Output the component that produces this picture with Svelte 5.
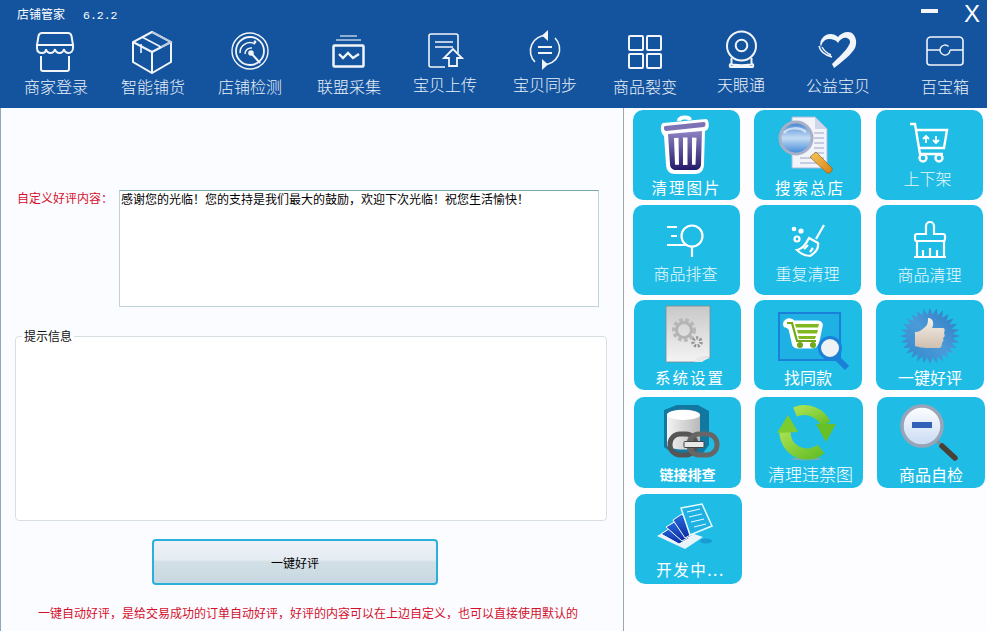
<script>
  const nav = [
    { label: '商家登录', w: 98, y: 0, icon: '<path d="M8 3h26c2 0 3 1 3.500 3L39 15H3l1.500-9C5 4 6 3 8 3Z"/><path d="M3 15v3c0 3 2 5 5 5s4-2 4-4c0 2 2 4 4.500 4s4-2 4.500-4c0 2 2 4 4.500 4s4-2 4.500-4c0 2 2 4 4.500 4s4.500-2 4.500-5v-3"/><path d="M7 26v13a2 2 0 0 0 2 2h24a2 2 0 0 0 2-2V26"/>' },
    { label: '智能铺货', w: 96, y: 0, icon: '<path d="M21 2 40 12v20L21 43 2 32V12Z"/><path d="M2 12 21 22 40 12M21 22v21"/><path d="M11 7 30 17M10 14v9" stroke-width="1.600"/><path d="M21 2 40 12 30 17" stroke="#c4cede" stroke-width="1.600"/>' },
    { label: '店铺检测', w: 98, y: 0, icon: '<circle cx="22" cy="21" r="18" stroke-width="1.400"/><circle cx="22" cy="21" r="14" stroke-width="1.800"/><path d="M12 23a10 10 0 0 1 15-9" stroke-width="1.500"/><path d="M17 24a6 6 0 0 1 7-6" stroke-width="1.500"/><path d="M23 23 32 33" stroke-width="2"/><circle cx="23" cy="23" r="1.800" fill="#fff"/><circle cx="27" cy="12" r="1.400" fill="#fff" stroke="none"/>' },
    { label: '联盟采集', w: 100, y: 0, icon: '<path d="M13 6h17M9 10h25" stroke-width="1.400" stroke="#c4d4e8"/><rect x="6.500" y="15.500" width="30" height="21" rx="1" stroke-width="2.500"/><path d="m12 24 4 4 5-5 5 5 6-4" stroke-width="2.400"/>' },
    { label: '宝贝上传', w: 92, y: -2, icon: '<g transform="translate(2 1)"><path d="M33 22V5a2 2 0 0 0-2-2H6a2 2 0 0 0-2 2v29a2 2 0 0 0 2 2h14" stroke-width="1.600"/><path d="M10 11h18M10 16h18" stroke-width="1.600"/><path d="m28 18-9 9h5v8h8v-8h5Z" stroke-width="1.800"/></g>' },
    { label: '宝贝同步', w: 108, y: -2, icon: '<g transform="translate(2 0)"><path d="M22 5.500A15.500 15.500 0 0 0 10 32" stroke-width="1.600"/><path d="M18 34.500A15.500 15.500 0 0 0 30 8" stroke-width="1.600"/><path d="M23 0v11l-6-5.500Z" fill="#fff" stroke="none"/><path d="M17 29v11l6-5.500Z" fill="#fff" stroke="none"/><path d="M13 17h14M13 23h14" stroke-width="2"/></g>' },
    { label: '商品裂变', w: 92, y: 0, icon: '<g transform="translate(2 2)"><rect x="4" y="4" width="14" height="14" rx="1"/><rect x="22" y="4" width="14" height="14" rx="1"/><rect x="4" y="22" width="14" height="14" rx="1"/><rect x="22" y="22" width="14" height="14" rx="1"/></g>' },
    { label: '天眼通', w: 100, y: -2, icon: '<g transform="translate(2.500 0)"><circle cx="20" cy="16" r="14.500"/><circle cx="20" cy="15.500" r="5.800"/><path d="M9 34c3 1.500 19 1.500 22 0M9 34c-1 0-1 3 0 3h22c1 0 1-3 0-3M10 28v6M30 28v6"/></g>' },
    { label: '公益宝贝', w: 94, y: -1, icon: '<path d="M18 38C26 32 36 24 39 18C42 11 39 2 32 2C28 2 24 4 22 7C19 4 14 3 10 5C5 8 3 13 5 17C6 12 9 9 13 9C17 9 20 10 22 13C24 9 28 7 31 8C34 9 35 12 33 15C30 21 22 28 16 34Z" fill="#fff" stroke="none"/><path d="M3 16c1 5 6 9 13 11M6 17c2 4 5 6 9 8" stroke-width="1.400"/>' },
    { label: '百宝箱', w: 120, y: 0, icon: '<g transform="translate(2 0)"><path d="M6 7h28a4 4 0 0 1 4 4v21a3 3 0 0 1-3 3H5a3 3 0 0 1-3-3V11a4 4 0 0 1 4-4Z" stroke-width="1.600"/><path d="M2 20h13M25 20h13" stroke-width="1.600"/><path d="M25 20a5 5 0 1 1-1.500-3.500" stroke-width="1.400"/></g>' }
  ];

  // spiky badge behind the thumb
  const starPoints = Array.from({ length: 56 }, (_, i) => {
    const r = i % 2 ? 23 : 30;
    const a = (i / 56) * Math.PI * 2;
    return `${(54 + r * Math.cos(a)).toFixed(1)},${(36 + r * 0.94 * Math.sin(a)).toFixed(1)}`;
  }).join(' ');
</script>

<div class="app">
  <header class="header">
    <div class="title">店铺管家<span class="ver">6.2.2</span></div>
    <div class="win">
      <span class="min"></span>
      <span class="close">X</span>
    </div>
    <nav class="nav">
      {#each nav as item}
        <div class="nav-item" style="width: {item.w}px">
          <svg width="44" height="44" viewBox="0 0 44 44" fill="none" stroke="#fff" stroke-width="2" opacity="0.94">{@html item.icon}</svg>
          <span style="margin-top: {item.y}px">{item.label}</span>
        </div>
      {/each}
    </nav>
  </header>

  <div class="body">
    <main class="left">
      <div class="form-row">
        <label class="red" for="content">自定义好评内容：</label>
        <textarea id="content" readonly>感谢您的光临！您的支持是我们最大的鼓励，欢迎下次光临！祝您生活愉快！</textarea>
      </div>
      <fieldset class="info">
        <legend>提示信息</legend>
      </fieldset>
      <button class="action">一键好评</button>
      <p class="note">一键自动好评，是给交易成功的订单自动好评，好评的内容可以在上边自定义，也可以直接使用默认的</p>
    </main>

    <aside class="tools">
      <svg class="defs" width="0" height="0">
        <defs>
          <linearGradient id="trash" x1="0" y1="0" x2="0" y2="1"><stop offset="0" stop-color="#8d84c4"/><stop offset="1" stop-color="#241a68"/></linearGradient>
          <linearGradient id="lens" x1="0" y1="0" x2="0" y2="1"><stop offset="0" stop-color="#3f80d0"/><stop offset="0.5" stop-color="#c4dcf4"/><stop offset="1" stop-color="#3a86d8"/></linearGradient>
          <linearGradient id="orange" x1="0" y1="0" x2="1" y2="1"><stop offset="0" stop-color="#f8c860"/><stop offset="1" stop-color="#d88010"/></linearGradient>
          <linearGradient id="paper" x1="0" y1="0" x2="0" y2="1"><stop offset="0" stop-color="#c8c8c8"/><stop offset="1" stop-color="#f4f4f4"/></linearGradient>
          <linearGradient id="star" x1="1" y1="0" x2="0" y2="1"><stop offset="0" stop-color="#2a78c0"/><stop offset="0.5" stop-color="#4c9ad8"/><stop offset="1" stop-color="#2c84c8"/></linearGradient>
          <linearGradient id="thumb" x1="0" y1="0" x2="0" y2="1"><stop offset="0" stop-color="#f6f0e8"/><stop offset="1" stop-color="#cfc0b0"/></linearGradient>
          <linearGradient id="db" x1="0" y1="0" x2="1" y2="0"><stop offset="0" stop-color="#f4f4f4"/><stop offset="1" stop-color="#b8b8b8"/></linearGradient>
          <linearGradient id="green" x1="0" y1="0" x2="1" y2="1"><stop offset="0" stop-color="#a6e050"/><stop offset="1" stop-color="#68c028"/></linearGradient>
          <linearGradient id="glass" x1="0" y1="0" x2="0" y2="1"><stop offset="0" stop-color="#ffffff"/><stop offset="1" stop-color="#c8daf4"/></linearGradient>
          <linearGradient id="sheet" x1="0" y1="0" x2="0" y2="1"><stop offset="0" stop-color="#2a6ce0"/><stop offset="1" stop-color="#0a2ca0"/></linearGradient>
        </defs>
      </svg>

      <div class="row r1">
        <div class="tile">
          <svg viewBox="0 0 107 62">
            <path d="M46 11c0-4 10-5 11-1" fill="none" stroke="#fff" stroke-width="4"/>
            <path d="M30 13 73 9c3 0 4 9 1 11l-2 1-1 33c0 7-4 10-9 10H42c-5 0-9-3-9-10L31 26c-4-3-4-12-1-13Z" fill="#fff"/>
            <path d="M32 16 71 12c2 0 2 4 0 5L33 21c-2 0-3-4-1-5Z" fill="#7d72b4"/>
            <path d="M35 24 69 21l-1 33c0 4-3 6-6 6H43c-3 0-6-2-6-6Z" fill="url(#trash)"/>
            <path d="M41 28l4.500-.3.500 27h-4ZM50 27.500h4.500v27.500h-4.500ZM59 27.500l4.500.2-1 27h-3.500Z" fill="#fff"/>
          </svg>
          <span class="lbl spaced">清理图片</span>
        </div>
        <div class="tile">
          <svg viewBox="0 0 107 62">
            <path d="M38 7h23l12 12v39H38Z" fill="#f2f4fa" stroke="#b0b8d8"/>
            <path d="M61 7v12h12" fill="#cfd6ea"/>
            <path d="M60 23h10M60 28h10M60 33h10M60 38h10M60 43h10M46 48h24M46 53h22" stroke="#9aa4c8"/>
            <circle cx="42" cy="28" r="16" fill="url(#lens)" stroke="#a8b0c8" stroke-width="3"/>
            <path d="M30 23c4-6 16-6 22-1" fill="none" stroke="#fff" stroke-opacity="0.6" stroke-width="2.500"/>
            <path d="M56 47 62 42 78 58c1 3-2 6-5 5Z" fill="url(#orange)" stroke="#8a6a20" stroke-width="0.700"/>
          </svg>
          <span class="lbl spaced shift">搜索总店</span>
        </div>
        <div class="tile up">
          <svg viewBox="0 0 107 62" fill="none" stroke="#fff" stroke-width="2.400">
            <path d="M34 14h5l5 30h23"/>
            <path d="M41 20h30l-3 18H43"/>
            <circle cx="47" cy="48" r="3.500"/>
            <circle cx="63" cy="48" r="3.500"/>
            <path d="M50 33v-7m-3 3 3-3 3 3M60 26v7m-3-3 3 3 3-3" stroke-width="1.800"/>
          </svg>
          <span class="lbl pull">上下架</span>
        </div>
      </div>

      <div class="row r2">
        <div class="tile up">
          <svg viewBox="0 0 107 62" fill="none" stroke="#fff" stroke-width="2.200">
            <circle cx="59" cy="31" r="10.500"/>
            <path d="M59 42v10M34 22h10M38 31h6M34 40h20"/>
          </svg>
          <span class="lbl pull-1">商品排查</span>
        </div>
        <div class="tile up">
          <svg viewBox="0 0 107 62" fill="none" stroke="#fff" stroke-width="2.200">
            <path d="M70 20 62 34"/>
            <path d="M55 33 64 38c1 6-3 10-8 13-5 0-10-3-13-6 6-1 9-6 12-12Z"/>
            <path d="M50 44l4-4M56 47l3-4"/>
            <circle cx="40" cy="24" r="1.200" fill="#fff"/>
            <circle cx="47" cy="26" r="1.500" fill="#fff"/>
            <circle cx="43" cy="34" r="2.500"/>
          </svg>
          <span class="lbl">重复清理</span>
        </div>
        <div class="tile up">
          <svg viewBox="0 0 107 62" fill="none" stroke="#fff" stroke-width="2.200">
            <path d="M50 29v-8a4 4 0 0 1 8 0v8h9a2 2 0 0 1 2 2v3a2 2 0 0 1-2 2H41a2 2 0 0 1-2-2v-3a2 2 0 0 1 2-2Z"/>
            <path d="M41 36v16h27V36M38 52h32M47 52v-7M54 52v-9M61 52v-7"/>
          </svg>
          <span class="lbl up-1">商品清理</span>
        </div>
      </div>

      <div class="row r3">
        <div class="tile">
          <svg viewBox="0 0 107 62">
            <path d="M32 6h44v52c-6-2-12 0-16 4H32Z" fill="url(#paper)" stroke="#7c8a90" stroke-width="0.800"/>
            <path d="M60 62c2-5 8-7 16-4-4 1-6 3-8 4Z" fill="#e8e8e8"/>
            <circle cx="50" cy="30" r="9.500" fill="none" stroke="#b8b8b8" stroke-width="5" stroke-dasharray="3.500 2.200"/>
            <circle cx="50" cy="30" r="7.500" fill="none" stroke="#b4b4b4" stroke-width="3"/>
            <circle cx="63" cy="42" r="4" fill="none" stroke="#949494" stroke-width="3.500" stroke-dasharray="2 1.500"/>
          </svg>
          <span class="lbl spaced shift">系统设置</span>
        </div>
        <div class="tile">
          <svg viewBox="0 0 107 62">
            <rect x="25" y="13" width="61" height="47" fill="#1fb0e4" stroke="#1a80d8" stroke-width="2"/>
            <path d="M32 21c3-2 6-1 8 1h24c3 0 4 3 3 5l-3 14c-1 4-3 6-6 6H43c-2 0-4-2-4-5l-3-13c-1-2-2-2-4-3-2 0-2-4 0-5Z" fill="#fff" stroke="#fff" stroke-width="3"/>
            <path d="M33 23h5l5 18h19" fill="none" stroke="#70a818" stroke-width="2.200"/>
            <path d="M41 24h24l-1 3.500H42ZM43 30h21l-1 3.500H44ZM44 36h18l-1 3H45Z" fill="#80b820"/>
            <circle cx="46" cy="45" r="3" fill="#70a818"/>
            <circle cx="59" cy="45" r="3" fill="#70a818"/>
            <path d="M82 57 93 68" stroke="#1a80d8" stroke-width="6"/>
            <circle cx="76" cy="48" r="10.500" fill="#eef2f4" stroke="#1a80d8" stroke-width="3"/>
          </svg>
          <span class="lbl">找同款</span>
        </div>
        <div class="tile">
          <svg viewBox="0 0 107 62">
            <polygon points={starPoints} fill="url(#star)"/>
            <path d="M49 27c3-2 3-6 3-9 3 0 6 2 5 8l-1 2h11c2 0 2 3 1 5 1 2 1 4-1 5 1 2 0 4-1 5 0 3-1 5-3 5H50c-3 0-7-1-11-2V32c4 0 7-2 10-5Z" fill="url(#thumb)"/>
          </svg>
          <span class="lbl">一键好评</span>
        </div>
      </div>

      <div class="row r4">
        <div class="tile">
          <svg viewBox="0 0 107 62">
            <path d="M30 13 43 8h21l11 6v34l-6 8H38l-8-6Z" fill="#1278a0"/>
            <path d="M33 18c0-7 33-7 33 0v30c0 6-33 6-33 0Z" fill="url(#db)"/>
            <ellipse cx="49.500" cy="18" rx="16.500" ry="5" fill="#fff"/>
            <rect x="36" y="37" width="26" height="21" rx="10" fill="none" stroke="#555" stroke-width="5"/>
            <rect x="55" y="37" width="28" height="21" rx="10" fill="none" stroke="#666" stroke-width="5"/>
            <rect x="50" y="44.500" width="20" height="6" rx="1" fill="#e8e8e8" stroke="#444"/>
          </svg>
          <span class="lbl bold">链接排查</span>
        </div>
        <div class="tile">
          <svg viewBox="0 0 107 62">
            <ellipse cx="51" cy="62" rx="16" ry="1.500" fill="#8fa8a8" opacity="0.700"/>
            <path d="M40 15A24 24 0 0 1 71 27" fill="none" stroke="url(#green)" stroke-width="10"/>
            <path d="M61 27H81L71 45Z" fill="#68c028"/>
            <path d="M30 34A22 22 0 0 0 66 52" fill="none" stroke="url(#green)" stroke-width="11"/>
            <path d="M22 36 33 18 43 35Z" fill="#7ccc30"/>
          </svg>
          <span class="lbl wide">清理违禁图</span>
        </div>
        <div class="tile">
          <svg viewBox="0 0 107 62">
            <path d="M60 44 66 50" stroke="#8a8a8a" stroke-width="3"/>
            <path d="M65 49 78 61" stroke="#4a4038" stroke-width="5.500" stroke-linecap="round"/>
            <circle cx="45" cy="29" r="20" fill="url(#glass)" stroke="#9aa4b8" stroke-width="3.500"/>
            <rect x="35" y="25" width="20" height="6" fill="#3060b8"/>
          </svg>
          <span class="lbl">商品自检</span>
        </div>
      </div>

      <div class="row r5">
        <div class="tile">
          <svg viewBox="0 0 107 62">
            <path d="M22 42 38 33l30 10-18 12Z" fill="#e8f4fa"/>
            <ellipse cx="71" cy="47" rx="6" ry="2.500" fill="#1a9ad0"/>
            <path d="M26 40 37 33l18 11-11 6Z" fill="url(#sheet)" stroke="#fff"/>
            <path d="M31 33 41 27l17 14-11 6Z" fill="url(#sheet)" stroke="#fff"/>
            <path d="M38 26 47 20l14 18-11 6Z" fill="url(#sheet)" stroke="#fff"/>
            <path d="M46 14 67 10l10 22-22 9Z" fill="#1fb0e4" stroke="#e8ffff" stroke-width="1.500"/>
            <path d="M52 18l13-3M54 23l13-3M56 28l13-3M59 33l12-3" stroke="#e8ffff"/>
          </svg>
          <span class="lbl spaced shift dev">开发中...</span>
        </div>
      </div>
    </aside>
  </div>
</div>

<style>
  :global(body) {
    margin: 0;
    overflow: hidden;
    background: #fbfcff;
  }

  .app {
    width: 987px;
    height: 631px;
    display: flex;
    flex-direction: column;
    overflow: hidden;
    font-family: "Noto Sans CJK SC", "Liberation Sans", sans-serif;
  }

  .header {
    position: relative;
    height: 108px;
    flex: none;
    background: #14549f;
    color: #fff;
    overflow: hidden;
  }

  .title {
    padding: 6px 0 0 17px;
    height: 18px;
    font-size: 12px;
    line-height: 16px;
  }

  .ver {
    margin-left: 18px;
    font-family: "Liberation Mono", monospace;
    font-size: 11.500px;
  }

  .win {
    position: absolute;
    top: 0;
    right: 7px;
    display: flex;
    align-items: flex-start;
    gap: 26px;
  }

  .min {
    width: 17px;
    height: 4px;
    margin-top: 9px;
    background: #f4f6fa;
  }

  .close {
    font-family: "Liberation Sans", sans-serif;
    font-size: 24px;
    line-height: 28px;
  }

  .nav {
    display: flex;
    padding: 6px 0 0 7px;
  }

  .nav-item {
    flex: none;
    display: flex;
    flex-direction: column;
    align-items: center;
    white-space: nowrap;
    font-size: 16px;
    font-weight: 300;
    line-height: 24px;
    color: #e8f0f8;
  }

  .nav-item svg {
    display: block;
  }

  .body {
    flex: 1;
    display: flex;
    min-height: 0;
  }

  .left {
    width: 624px;
    box-sizing: border-box;
    flex: none;
    padding: 82px 16px 0 15px;
    border-left: 1px solid #8fa8b8;
    border-right: 1px solid #9aa8b0;
    font-size: 12px;
  }

  .form-row {
    display: flex;
  }

  .red {
    width: 103px;
    padding: 0 0 0 1px;
    box-sizing: border-box;
    line-height: 16px;
    color: #d4102c;
  }

  textarea {
    width: 480px;
    height: 117px;
    box-sizing: border-box;
    padding: 0 1px;
    border: 1px solid #c0d4da;
    border-top-color: #78a8b0;
    background: #fff;
    font: 12px/16px "Noto Sans CJK SC", sans-serif;
    color: #000;
    resize: none;
    outline: none;
  }

  .info {
    width: 592px;
    height: 192px;
    box-sizing: border-box;
    margin: 22px 0 0 -1px;
    padding: 0;
    border: 1px solid #d8dfe3;
    border-radius: 4px;
    background: #fff;
  }

  .info legend {
    margin-left: 6px;
    padding: 0 2px;
    font-size: 12px;
    line-height: 14px;
    color: #111;
  }

  .action {
    display: block;
    width: 286px;
    height: 46px;
    margin: 18px 0 0 136px;
    border: 2px solid #2ab0da;
    border-radius: 4px;
    background: linear-gradient(#eef2f8 0, #e4ebf1 44%, #d2dfe6 50%, #c8d8e0 100%);
    font: 12px "Noto Sans CJK SC", sans-serif;
    color: #000;
  }

  .note {
    margin: 20px 0 0 22px;
    line-height: 16px;
    color: #d4102c;
    white-space: nowrap;
  }

  .tools {
    flex: 1;
    padding-top: 2px;
    background: #fdfdff;
  }

  .defs {
    position: absolute;
  }

  .row {
    display: flex;
    gap: 14px;
    margin-bottom: 5px;
  }

  .r1, .r2 { padding-left: 9px; }
  .r1 .tile:last-child, .r2 .tile:last-child { margin-left: 1px; }
  .r3 { padding-left: 10px; gap: 13px; margin-bottom: 7px; }
  .r3 .tile:nth-child(2) { width: 108px; }
  .r3 .tile:last-child { width: 108px; }
  .r3 .tile:last-child { margin-left: 1px; }
  .r4 { padding-left: 10px; margin-bottom: 6px; }
  .r4 .tile { height: 91px; }
  .r4 .tile:nth-child(2) { width: 108px; }
  .r4 .tile:last-child { width: 108px; }
  .r5 { padding-left: 11px; }

  .tile {
    width: 107px;
    height: 90px;
    flex: none;
    border-radius: 10px;
    background: #1fbde6;
    color: #fff;
    overflow: hidden;
    text-align: center;
  }

  .tile svg {
    display: block;
    width: 107px;
    height: 62px;
    overflow: visible;
  }

  .lbl {
    display: block;
    margin-top: 4px;
    font-size: 16px;
    line-height: 22px;
    color: #fff;
    white-space: nowrap;
  }

  .up .lbl {
    margin-top: -5px;
    color: #e8f8fc;
    font-weight: 300;
  }

  .up .up-1 {
    margin-top: -4px;
  }

  .pull { padding-right: 4px; }
  .pull-1 { padding-right: 2px; }

  .spaced {
    letter-spacing: 2px;
    font-size: 15.500px;
  }

  .shift { padding-left: 5px; }
  .dev { letter-spacing: 1.500px; margin-top: 2px; padding-left: 4px; }

  .bold {
    font-size: 14px;
    font-weight: 700;
  }

  .wide {
    font-size: 17px;
    font-weight: 300;
    padding-left: 3px;
  }
</style>
